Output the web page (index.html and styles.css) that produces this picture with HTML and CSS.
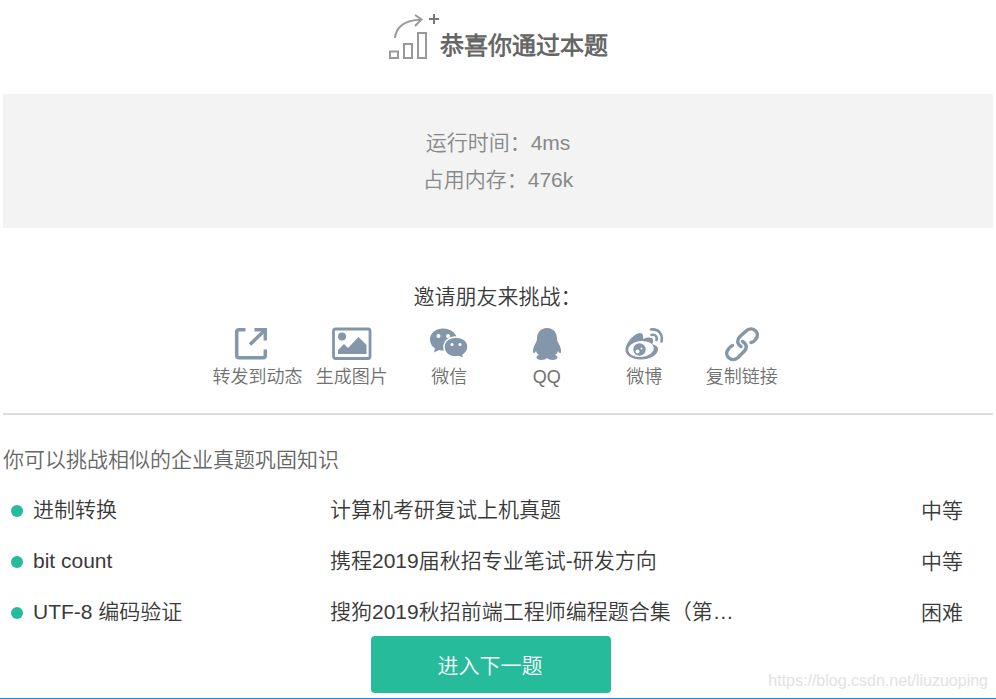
FILE: index.html
```html
<!DOCTYPE html>
<html lang="zh-CN">
<head>
<meta charset="utf-8">
<title>恭喜你通过本题</title>
<link rel="stylesheet" href="styles.css">
</head>
<body>
<main class="result">
  <header class="result-header">
    <svg class="chart-icon" width="54" height="48" viewBox="0 0 54 48" fill="none" stroke="#999" stroke-width="2">
      <path d="M3 38.500h8v6.500H3zM17 31h8v14h-8zM31 20h8v25h-8z"/>
      <path d="M8 25C9 14 17 7.500 34 6.500M28 2l6.500 4.500-6.500 6.500"/>
      <path d="M47 1v10M42 6h10" stroke="#777"/>
    </svg>
    <h1>恭喜你通过本题</h1>
  </header>
  <section class="stats">
    <p>运行时间：4ms</p>
    <p>占用内存：476k</p>
  </section>
  <section class="share">
    <h2>邀请朋友来挑战：</h2>
    <ul class="share-list">
      <li class="feed">
        <svg width="40" height="36" viewBox="0 0 40 36" fill="none" stroke="#8496aa" stroke-width="3.500">
          <path d="M14.500 3.700H8Q5.700 3.700 5.700 6v23.500q0 2.200 2.300 2.200h24q2.300 0 2.300-2.200V23.500M19 18.500L33 5"/><path d="M23.500 3.700h10.800v10.800"/>
        </svg><span>转发到动态</span>
      </li>
      <li>
        <svg width="40" height="36" viewBox="0 0 40 36" fill="#8496aa">
          <rect x="1.500" y="3" width="36.500" height="29.500" rx="2" fill="none" stroke="#8496aa" stroke-width="2.800"/>
          <circle cx="10" cy="10.500" r="4"/><path d="M6 28v-4l6-6 4 4L26.500 11 34.500 19v9z"/>
        </svg><span>生成图片</span>
      </li>
      <li>
        <svg width="40" height="36" viewBox="0 0 40 36" fill="#8496aa">
          <path d="M14 2.500C6 2.500 1 7.500 1 13.500c0 4 2 7 5 9l-1 4 5-2.500c11 3 18-3 18-10.500C28 7.500 22 2.500 14 2.500z"/>
          <path d="M27 11c-7 0-12 4-12 10 0 7 7 11.500 15 9.500l5 2.500-1-4c3-2 5-5 5-8 0-6-5-10-12-10z" stroke="#fff" stroke-width="1.500"/>
          <g fill="#fff"><circle cx="9.500" cy="10" r="2"/><circle cx="19" cy="10" r="2"/><circle cx="23" cy="18.500" r="1.600"/><circle cx="31" cy="18.500" r="1.600"/></g>
        </svg><span>微信</span>
      </li>
      <li>
        <svg width="40" height="36" viewBox="0 0 40 36" fill="#8496aa">
          <path d="M20 2C13 2 10 7 10 13c0 3-4 7-4 12 0 3 1 3 3 0 .5 2 1.500 3 3 4-4 1-3 5 2 5 3 0 5-1 6-2 1 1 3 2 6 2 5 0 6-4 2-5 1.500-1 2.500-2 3-4 2 3 3 3 3 0 0-5-4-9-4-12 0-6-3-11-10-11z"/>
        </svg><span>QQ</span>
      </li>
      <li>
        <svg width="40" height="36" viewBox="0 0 40 36" fill="#8496aa">
          <path d="M1.500 23C2.500 16 10 7.500 16 7q4 0 3 6c5-2 10-2 10 1q1 2-1 4c4 1 6 3 6 5 0 6-8 10.500-17 10.500S.5 29 1.500 23z"/>
          <ellipse cx="17" cy="23" rx="12.800" ry="8" fill="#fff" transform="rotate(-6 17 23)"/>
          <circle cx="15.500" cy="23.500" r="6.200"/><circle cx="13.500" cy="25.500" r="2" fill="#fff"/><circle cx="17.500" cy="22.500" r="1" fill="#fff"/>
          <path d="M27 3.500c8-1 12 5 10.500 12M27.500 9c4-1 6 2 5 5" fill="none" stroke="#8496aa" stroke-width="2.600" stroke-linecap="round"/>
        </svg><span>微博</span>
      </li>
      <li>
        <svg width="40" height="36" viewBox="0 0 40 36" fill="none" stroke="#8496aa" stroke-width="3.400" stroke-linecap="round">
          <path d="M19 20.500C14.500 17.500 15 13.500 18 10.500L24 5C30-1 39.500 7 33.500 13.500Q32 16 29 16.500"/>
          <path d="M20.500 15.500c5 3 4.500 7 1.500 10L16 31.500C9.500 37.500 1 29 6.500 23q1.500-2.500 4-3.500"/>
        </svg><span>复制链接</span>
      </li>
    </ul>
  </section>
  <section class="similar">
    <h2>你可以挑战相似的企业真题巩固知识</h2>
    <ul class="problems">
      <li><span class="name">进制转换</span><span class="source">计算机考研复试上机真题</span><span class="level">中等</span></li>
      <li><span class="name">bit count</span><span class="source">携程2019届秋招专业笔试-研发方向</span><span class="level">中等</span></li>
      <li><span class="name">UTF-8 编码验证</span><span class="source">搜狗2019秋招前端工程师编程题合集（第…</span><span class="level">困难</span></li>
    </ul>
  </section>
  <button class="next" type="button">进入下一题</button>
</main>
<div class="watermark">https://blog.csdn.net/liuzuoping</div>
</body>
</html>
```

FILE: styles.css
```css
* { box-sizing: border-box; }
body, h1, h2, p, ul { margin: 0; padding: 0; }
ul { list-style: none; }
body {
  height: 699px;
  overflow: hidden;
  background: #fff;
  border-bottom: 1px solid #1e88dc;
  color: #3a3a3a;
  font: 350 21px/30px "Liberation Sans", "Noto Sans CJK SC DemiLight", "Noto Sans CJK SC", sans-serif;
}
.result { display: flex; flex-direction: column; padding: 0 3px; }
.result-header { display: flex; justify-content: center; height: 94px; padding-top: 13px; }
.chart-icon { margin-right: -1px; }
h1 { margin-top: 18px; margin-right: 1px; font-size: 24px; line-height: 30px; font-weight: 700; color: #666; }
h2 { font-size: 21px; font-weight: inherit; line-height: 30px; }
.stats { height: 134px; padding-top: 30px; background: #f3f3f3; color: #888; text-align: center; line-height: 37px; }
.share { height: 187px; padding-top: 54px; border-bottom: 2px solid #ddd; }
.share h2 { padding-right: 1px; text-align: center; }
.share-list { display: grid; grid-template-columns: repeat(6, 97.5px); justify-content: center; margin-top: 14px; }
.share-list li { display: flex; flex-direction: column; align-items: center; color: #707070; font-size: 18px; line-height: 28px; white-space: nowrap; }
.share-list .feed { align-items: flex-start; padding-left: 7px; }
.share-list .feed svg { margin-left: 18px; }
.share-list svg { margin-bottom: 1px; }
.similar h2 { margin: 30px 0 10px; color: #666; }
.problems li { display: grid; grid-template-columns: 319px 1fr auto; height: 51px; align-items: center; padding: 0 30px 0 8px; }
.name, .source { margin-top: -2px; }
.name { display: flex; align-items: center; }
.name::before { content: ""; width: 12px; height: 12px; margin: 2px 10px 0 0; border-radius: 50%; background: #26bb9b; }
.next { align-self: center; width: 240px; height: 57px; margin: -2px 14px 0 0; padding: 2px 2px 0 0; border: 0; border-radius: 4px; background: #26bb9b; color: #fff; font: inherit; }
.watermark { position: absolute; right: 8px; bottom: 8px; color: #e2e2e2; font-size: 16px; line-height: 20px; }
```
